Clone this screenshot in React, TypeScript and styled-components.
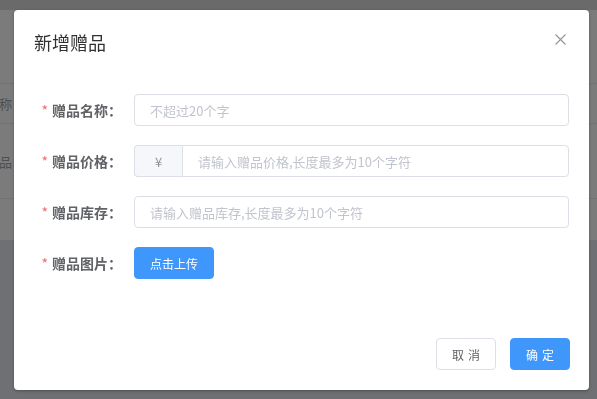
import styled, { createGlobalStyle } from "styled-components";

const GlobalStyle = createGlobalStyle`
	html, body {
		margin: 0;
		padding: 0;
		width: 597px;
		height: 399px;
		overflow: hidden;
		font-family: "Noto Sans CJK SC", "Noto Sans", sans-serif;
	}
`;

// dimmed page that sits behind the modal mask
const Page = styled.div`
	display: flex;
	flex-direction: column;
	width: 597px;
	height: 399px;
	background-color: #6f7073;
`;

const TopBar = styled.div`
	height: 10px;
	background-color: #6a6a6a;
`;

const Table = styled.div`
	display: flex;
	flex-direction: column;
	background-color: #7b7b7b;
`;

const TableRow = styled.div<{ $h: number }>`
	display: flex;
	align-items: center;
	height: ${(p) => p.$h}px;
	border-bottom: 1px solid #717171;
	box-sizing: border-box;
`;

const EdgeCell = styled.div`
	display: flex;
	justify-content: flex-end;
	width: 12px;
	overflow: hidden;
	font-size: 13px;
	color: #4e4e4e;
	white-space: nowrap;
	flex-shrink: 0;
`;

const Mask = styled.div`
	position: fixed;
	inset: 0;
	display: flex;
	align-items: flex-start;
`;

const Dialog = styled.div`
	display: flex;
	flex-direction: column;
	width: 575px;
	height: 380px;
	margin: 10px 0 0 14px;
	box-sizing: border-box;
	background-color: #ffffff;
	border-radius: 4px;
	box-shadow: 0 1px 3px rgba(0, 0, 0, 0.3);
`;

const Header = styled.div`
	display: flex;
	align-items: center;
	justify-content: space-between;
	padding: 20px 20px 10px;
`;

const Title = styled.div`
	font-size: 18px;
	line-height: 24px;
	color: #303133;
`;

const CloseButton = styled.div`
	display: flex;
	align-items: center;
	justify-content: center;
	width: 16px;
	height: 16px;
	margin-right: 1px;
	margin-top: -6px;
	cursor: pointer;
`;

const Body = styled.div`
	display: flex;
	flex-direction: column;
	gap: 19px;
	padding: 30px 20px 0;
	flex: 1;
`;

const FormItem = styled.div`
	display: flex;
	align-items: center;
	height: 32px;
`;

const Label = styled.label`
	display: flex;
	justify-content: flex-end;
	align-items: center;
	width: 100px;
	padding-right: 12px;
	box-sizing: border-box;
	font-size: 14px;
	font-weight: 700;
	color: #606266;
	flex-shrink: 0;
`;

const Required = styled.span`
	color: #f56c6c;
	font-weight: 400;
	margin-right: 4px;
`;

const InputGroup = styled.div`
	display: flex;
	flex: 1;
	height: 32px;
`;

const Prepend = styled.div`
	display: flex;
	align-items: center;
	justify-content: center;
	width: 47px;
	background-color: #f5f7fa;
	border: 1px solid #dcdfe6;
	border-right: none;
	border-radius: 4px 0 0 4px;
	color: #909399;
	font-size: 13px;
`;

const Input = styled.input<{ $joined?: boolean }>`
	flex: 1;
	min-width: 0;
	height: 32px;
	box-sizing: border-box;
	padding: 0 15px;
	border: 1px solid #dcdfe6;
	border-radius: ${(p) => (p.$joined ? "0 4px 4px 0" : "4px")};
	font-family: inherit;
	font-size: 13px;
	color: #606266;
	outline: none;

	&::placeholder {
		color: #c0c4cc;
	}
`;

const Button = styled.button<{ $primary?: boolean }>`
	height: 32px;
	padding: 0 15px;
	box-sizing: border-box;
	border-radius: 4px;
	border: 1px solid ${(p) => (p.$primary ? "#3f97fb" : "#dcdfe6")};
	background-color: ${(p) => (p.$primary ? "#3f97fb" : "#ffffff")};
	color: ${(p) => (p.$primary ? "#ffffff" : "#606266")};
	font-family: inherit;
	font-size: 12px;
	cursor: pointer;
`;

const FooterButton = styled(Button)`
	width: 60px;
	letter-spacing: 4px;
	padding: 0 0 0 4px;
`;

const Footer = styled.div`
	display: flex;
	justify-content: flex-end;
	gap: 14px;
	padding: 10px 19px 20px;
`;

const CloseIcon = () => (
	<svg width="11" height="11" viewBox="0 0 11 11">
		<path d="M0.5 0.5 L10.5 10.5 M10.5 0.5 L0.5 10.5" stroke="#909399" strokeWidth="1.1" fill="none" />
	</svg>
);

export default function App() {
	return (
		<>
			<GlobalStyle />
			<Page>
				<TopBar />
				<Table>
					<TableRow $h={74} />
					<TableRow $h={40}>
						<EdgeCell>赠品名称</EdgeCell>
					</TableRow>
					<TableRow $h={75}>
						<EdgeCell>测试赠品</EdgeCell>
					</TableRow>
					<TableRow $h={42} />
				</Table>
			</Page>
			<Mask>
				<Dialog>
					<Header>
						<Title>新增赠品</Title>
						<CloseButton>
							<CloseIcon />
						</CloseButton>
					</Header>
					<Body>
						<FormItem>
							<Label><Required>*</Required>赠品名称：</Label>
							<InputGroup>
								<Input placeholder="不超过20个字" />
							</InputGroup>
						</FormItem>
						<FormItem>
							<Label><Required>*</Required>赠品价格：</Label>
							<InputGroup>
								<Prepend>¥</Prepend>
								<Input $joined placeholder="请输入赠品价格,长度最多为10个字符" />
							</InputGroup>
						</FormItem>
						<FormItem>
							<Label><Required>*</Required>赠品库存：</Label>
							<InputGroup>
								<Input placeholder="请输入赠品库存,长度最多为10个字符" />
							</InputGroup>
						</FormItem>
						<FormItem>
							<Label><Required>*</Required>赠品图片：</Label>
							<Button $primary>点击上传</Button>
						</FormItem>
					</Body>
					<Footer>
						<FooterButton>取消</FooterButton>
						<FooterButton $primary>确定</FooterButton>
					</Footer>
				</Dialog>
			</Mask>
		</>
	);
}
